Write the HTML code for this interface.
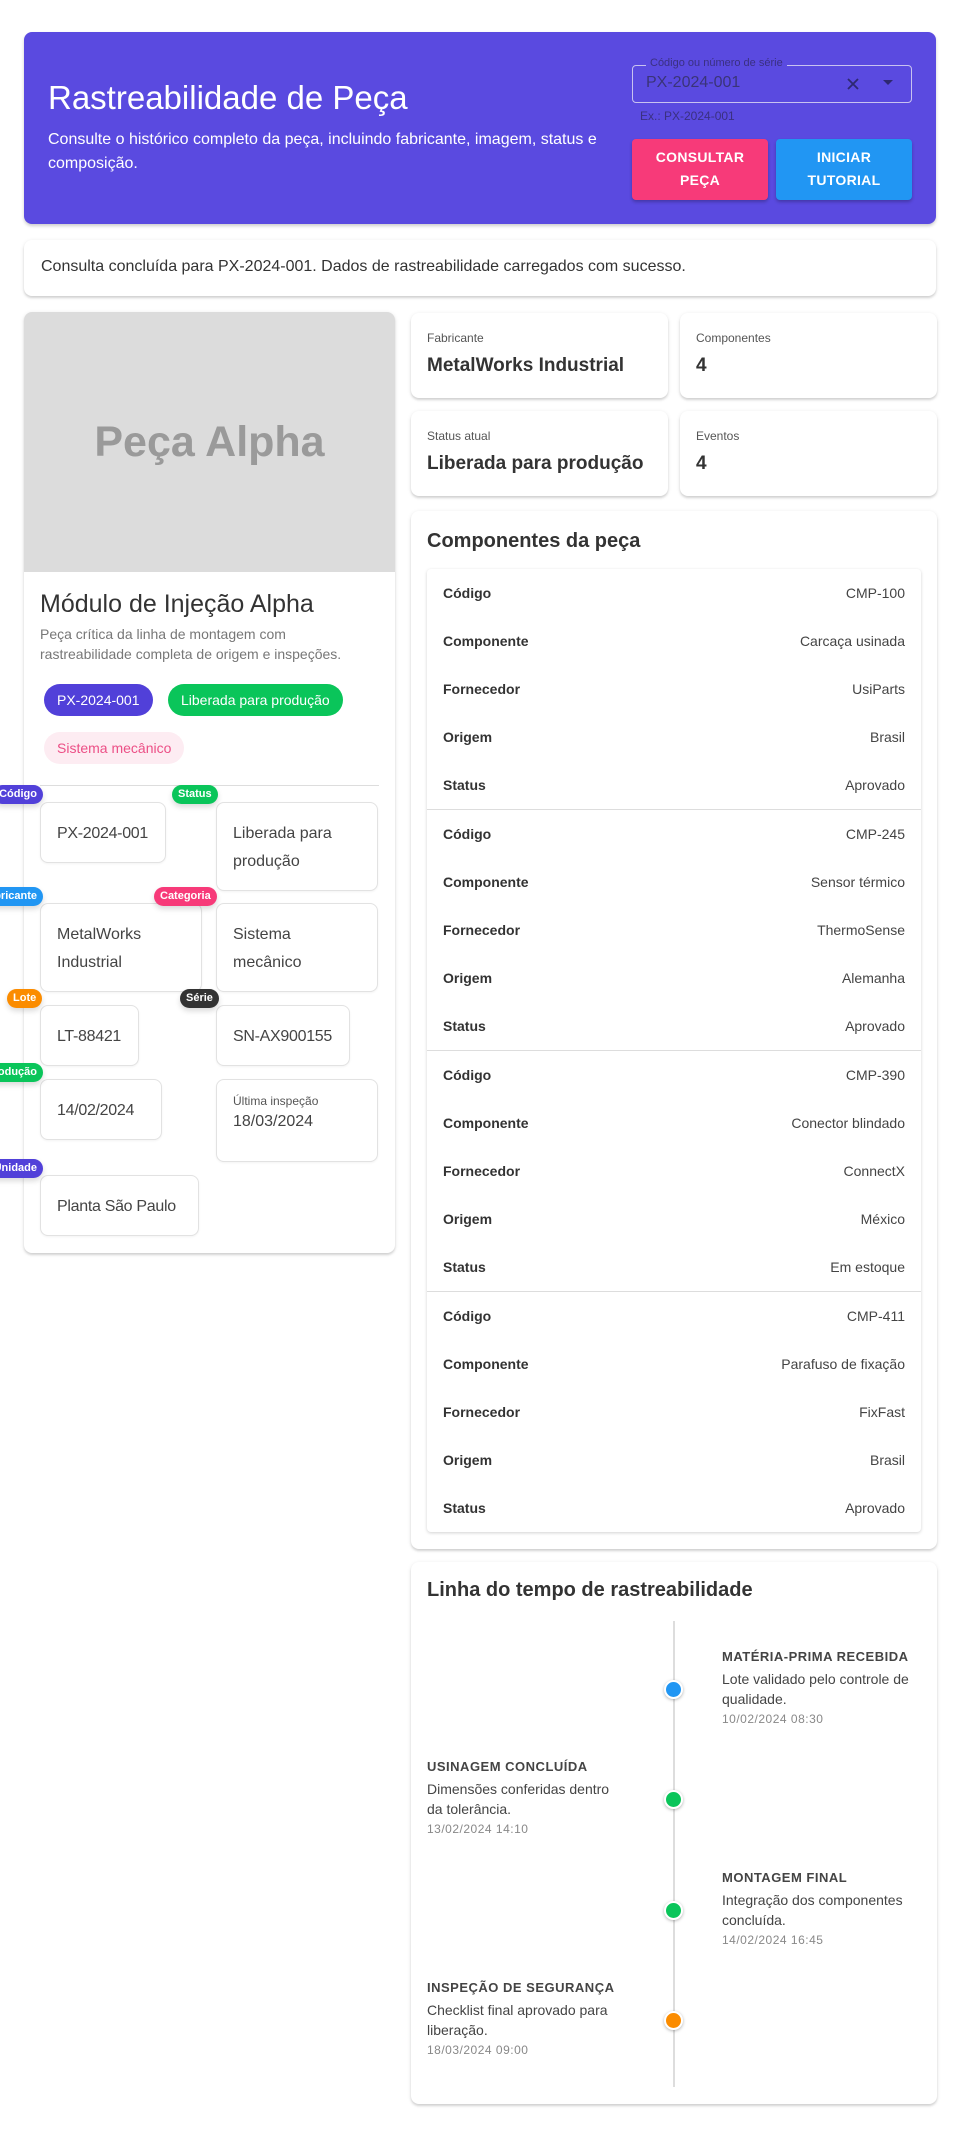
<!DOCTYPE html>
<html><head><meta charset="utf-8"><style>
*{box-sizing:border-box;margin:0;padding:0}
body{width:960px;height:2133px;background:#fff;font-family:"Liberation Sans",Arial,sans-serif;color:#333;position:relative;overflow:hidden}
.abs{position:absolute}
.card{position:absolute;background:#fff;border-radius:8px;box-shadow:0 2px 2px rgba(0,0,0,.12),0 1px 4px rgba(0,0,0,.1)}
.hdr{left:24px;top:32px;width:912px;height:192px;background:#5a4ae0;border-radius:8px;box-shadow:0 2px 3px rgba(0,0,0,.2)}
.btn{position:absolute;top:139px;height:61px;width:136px;border-radius:4px;color:#fff;font-size:14px;font-weight:bold;text-align:center;line-height:23px;padding-top:7px;box-shadow:0 2px 3px rgba(0,0,0,.25);letter-spacing:.3px}
.lbl{font-size:12px;color:#555}
.val{font-size:19px;font-weight:bold;color:#333}
.chip{position:absolute;height:32px;border-radius:16px;font-size:14px;line-height:32px;padding:0 13px;color:#fff}
.box{position:absolute;border:1px solid #e2e2e2;border-radius:8px;background:#fff;box-shadow:0 1px 2px rgba(0,0,0,.05);font-size:16px;color:#444;padding:17px 16px;line-height:28px}
.nw{white-space:nowrap;letter-spacing:-.3px;padding:17px 0 17px 16px}
.tag{position:absolute;height:19px;border-radius:10px;font-size:11px;font-weight:bold;color:#fff;line-height:19px;padding:0 6px;box-shadow:0 3px 6px rgba(0,0,0,.15)}
.row{height:48px;display:flex;justify-content:space-between;align-items:center;padding:0 16px;font-size:14px}
.row b{font-weight:bold;color:#333}
.row span{color:#444}
.grp{border-bottom:1px solid #ddd}
.ti{position:absolute;width:200px}
.ti h4{font-size:13px;font-weight:bold;color:#444;letter-spacing:.5px;margin-bottom:5px}
.ti p{font-size:14px;color:#444;line-height:20px}
.ti small{display:block;font-size:12px;color:#888;letter-spacing:.5px;margin-top:3px}
.dot{position:absolute;left:664px;width:19px;height:19px;border-radius:50%;border:2px solid #fff;box-shadow:0 1px 3px rgba(0,0,0,.3)}
</style></head><body>

<div class="abs hdr">
  <div class="abs" style="left:24px;top:47px;font-size:33px;color:#fff">Rastreabilidade de Peça</div>
  <div class="abs" style="left:24px;top:96px;width:580px;font-size:16px;line-height:24px;color:#fff">Consulte o histórico completo da peça, incluindo fabricante, imagem, status e composição.</div>
</div>
<div class="abs" style="left:632px;top:65px;width:280px;height:38px;border:1px solid #c8c2f0;border-radius:4px"></div>
<div class="abs" style="left:646px;top:57px;padding:0 4px;background:#5a4ae0;font-size:11px;color:#3a3080">Código ou número de série</div>
<div class="abs" style="left:646px;top:74px;font-size:16px;color:#3a3478">PX-2024-001</div>
<svg class="abs" style="left:846px;top:77px" width="14" height="14" viewBox="0 0 14 14"><path d="M2 2L12 12M12 2L2 12" stroke="#2e2870" stroke-width="1.8"/></svg>
<svg class="abs" style="left:883px;top:80px" width="10" height="6" viewBox="0 0 10 6"><path d="M0 0H10L5 5Z" fill="#2e2870"/></svg>
<div class="abs" style="left:640px;top:109px;font-size:12px;color:#3a3080">Ex.: PX-2024-001</div>
<div class="btn" style="left:632px;background:#f73a79">CONSULTAR<br>PEÇA</div>
<div class="btn" style="left:776px;background:#2196f3">INICIAR<br>TUTORIAL</div>

<div class="card" style="left:24px;top:240px;width:912px;height:56px"><div class="abs" style="left:17px;top:18px;font-size:16px;color:#333">Consulta concluída para PX-2024-001. Dados de rastreabilidade carregados com sucesso.</div></div>

<div class="card" style="left:24px;top:312px;width:371px;height:941px;overflow:visible">
  <div class="abs" style="left:0;top:0;width:371px;height:260px;background:#dcdcdc;border-radius:8px 8px 0 0;text-align:center;line-height:260px;font-size:43px;font-weight:bold;color:#9a9a9a">Peça Alpha</div>
</div>
<div class="abs" style="left:40px;top:590px;font-size:25px;color:#333">Módulo de Injeção Alpha</div>
<div class="abs" style="left:40px;top:624px;width:330px;font-size:14px;line-height:20px;color:#777">Peça crítica da linha de montagem com rastreabilidade completa de origem e inspeções.</div>
<div class="chip" style="left:44px;top:684px;background:#5140d9">PX-2024-001</div>
<div class="chip" style="left:168px;top:684px;background:#0ac55a">Liberada para produção</div>
<div class="chip" style="left:44px;top:732px;background:#fdecf2;color:#ec4f86">Sistema mecânico</div>
<div class="abs" style="left:40px;top:785px;width:339px;height:1px;background:#ddd"></div>

<div class="box nw" style="left:40px;top:802px;width:126px;height:61px">PX-2024-001</div>
<div class="box" style="left:216px;top:802px;width:162px;height:89px">Liberada para produção</div>
<div class="box" style="left:40px;top:903px;width:162px;height:89px">MetalWorks Industrial</div>
<div class="box" style="left:216px;top:903px;width:162px;height:89px">Sistema mecânico</div>
<div class="box nw" style="left:40px;top:1005px;width:99px;height:61px">LT-88421</div>
<div class="box nw" style="left:216px;top:1005px;width:134px;height:61px">SN-AX900155</div>
<div class="box nw" style="left:40px;top:1079px;width:122px;height:61px">14/02/2024</div>
<div class="box" style="left:216px;top:1079px;width:162px;height:83px;padding-top:12px"><div style="font-size:12px;line-height:18px;color:#555">Última inspeção</div><div style="line-height:24px">18/03/2024</div></div>
<div class="box nw" style="left:40px;top:1175px;width:159px;height:61px">Planta São Paulo</div>

<div class="tag" style="right:917px;top:785px;background:#5140d9">Código</div>
<div class="tag" style="left:172px;top:785px;background:#0ac55a">Status</div>
<div class="tag" style="right:917px;top:887px;background:#2196f3">Fabricante</div>
<div class="tag" style="left:154px;top:887px;background:#f73a79">Categoria</div>
<div class="tag" style="left:7px;top:989px;background:#fb8c00">Lote</div>
<div class="tag" style="left:180px;top:989px;background:#333">Série</div>
<div class="tag" style="right:917px;top:1063px;background:#0ac55a">Produção</div>
<div class="tag" style="right:917px;top:1159px;background:#5140d9">Unidade</div>

<div class="card" style="left:411px;top:313px;width:257px;height:85px"><div class="abs lbl" style="left:16px;top:18px">Fabricante</div><div class="abs val" style="left:16px;top:42px">MetalWorks Industrial</div></div>
<div class="card" style="left:680px;top:313px;width:257px;height:85px"><div class="abs lbl" style="left:16px;top:18px">Componentes</div><div class="abs val" style="left:16px;top:42px">4</div></div>
<div class="card" style="left:411px;top:411px;width:257px;height:85px"><div class="abs lbl" style="left:16px;top:18px">Status atual</div><div class="abs val" style="left:16px;top:42px">Liberada para produção</div></div>
<div class="card" style="left:680px;top:411px;width:257px;height:85px"><div class="abs lbl" style="left:16px;top:18px">Eventos</div><div class="abs val" style="left:16px;top:42px">4</div></div>

<div class="card" style="left:411px;top:511px;width:526px;height:1038px">
  <div class="abs" style="left:16px;top:19px;font-size:20px;font-weight:bold;color:#333">Componentes da peça</div>
  <div class="abs" style="left:16px;top:58px;width:494px;border-radius:4px;box-shadow:0 1px 3px rgba(0,0,0,.18)">
    <div class="grp"><div class="row"><b>Código</b><span>CMP-100</span></div><div class="row"><b>Componente</b><span>Carcaça usinada</span></div><div class="row"><b>Fornecedor</b><span>UsiParts</span></div><div class="row"><b>Origem</b><span>Brasil</span></div><div class="row"><b>Status</b><span>Aprovado</span></div></div>
    <div class="grp"><div class="row"><b>Código</b><span>CMP-245</span></div><div class="row"><b>Componente</b><span>Sensor térmico</span></div><div class="row"><b>Fornecedor</b><span>ThermoSense</span></div><div class="row"><b>Origem</b><span>Alemanha</span></div><div class="row"><b>Status</b><span>Aprovado</span></div></div>
    <div class="grp"><div class="row"><b>Código</b><span>CMP-390</span></div><div class="row"><b>Componente</b><span>Conector blindado</span></div><div class="row"><b>Fornecedor</b><span>ConnectX</span></div><div class="row"><b>Origem</b><span>México</span></div><div class="row"><b>Status</b><span>Em estoque</span></div></div>
    <div><div class="row"><b>Código</b><span>CMP-411</span></div><div class="row"><b>Componente</b><span>Parafuso de fixação</span></div><div class="row"><b>Fornecedor</b><span>FixFast</span></div><div class="row"><b>Origem</b><span>Brasil</span></div><div class="row"><b>Status</b><span>Aprovado</span></div></div>
  </div>
</div>

<div class="card" style="left:411px;top:1562px;width:526px;height:542px"></div>
<div class="abs" style="left:427px;top:1579px;font-size:20px;font-weight:bold;color:#333">Linha do tempo de rastreabilidade</div>
<div class="abs" style="left:673px;top:1621px;width:2px;height:466px;background:#ddd"></div>
<div class="dot" style="top:1680px;background:#2196f3"></div>
<div class="dot" style="top:1790px;background:#0ac55a"></div>
<div class="dot" style="top:1901px;background:#0ac55a"></div>
<div class="dot" style="top:2011px;background:#fb8c00"></div>
<div class="ti" style="left:722px;top:1649px"><h4>MATÉRIA-PRIMA RECEBIDA</h4><p>Lote validado pelo controle de qualidade.</p><small>10/02/2024 08:30</small></div>
<div class="ti" style="left:427px;top:1759px"><h4>USINAGEM CONCLUÍDA</h4><p>Dimensões conferidas dentro da tolerância.</p><small>13/02/2024 14:10</small></div>
<div class="ti" style="left:722px;top:1870px"><h4>MONTAGEM FINAL</h4><p>Integração dos componentes concluída.</p><small>14/02/2024 16:45</small></div>
<div class="ti" style="left:427px;top:1980px"><h4>INSPEÇÃO DE SEGURANÇA</h4><p>Checklist final aprovado para liberação.</p><small>18/03/2024 09:00</small></div>
</body></html>
